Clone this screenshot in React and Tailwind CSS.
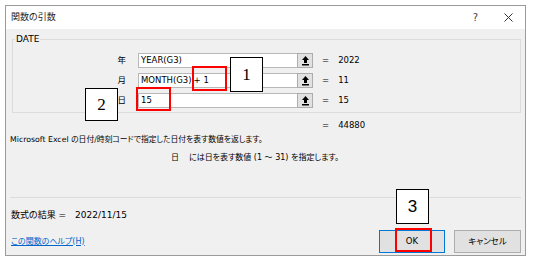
import React from 'react'

function PickIcon() {
  return (
    <svg width="7" height="10" viewBox="0 0 7 10" className="block">
      <path d="M3.5 0 L7 4 H5 V7 H2 V4 H0 Z" fill="#000" />
      <rect x="0" y="8" width="7" height="1.5" fill="#000" />
    </svg>
  )
}

function ArgRow({ label, children, value }) {
  return (
    <div className="flex items-center h-[15px]">
      <span className="w-[113px] text-right leading-none">{label}</span>
      <div className="ml-[12px] w-[160px] h-[15px] bg-white border border-[#b8b8b8] flex items-center pl-[2px] leading-none whitespace-nowrap">
        {children}
      </div>
      <div className="-ml-px w-[16px] h-[15px] bg-[#e1e1e1] border border-[#adadad] flex items-center justify-center">
        <PickIcon />
      </div>
      <span className="ml-[9px] leading-none">=</span>
      <span className="ml-[9px] leading-none">{value}</span>
    </div>
  )
}

export default function App() {
  return (
    <div className="relative w-[534px] h-[264px] bg-white pt-[5px] pl-[5px] text-[8.5px] text-black font-['DejaVu_Sans','Noto_Sans_CJK_JP',sans-serif] [font-feature-settings:'palt']">
      {/* dialog */}
      <div className="w-[521px] h-[251px] border border-[#9b9b9b] flex flex-col">
        <div className="h-[23px] bg-white flex items-center pl-[5px] pr-[12px] shrink-0">
          <span className="text-[#222] text-[9px]">関数の引数</span>
          <span className="ml-auto text-[10px] text-[#444]">?</span>
          <svg width="9" height="9" viewBox="0 0 9 9" className="ml-[26px]">
            <path d="M0.5 0.5 L8.5 8.5 M8.5 0.5 L0.5 8.5" stroke="#333" strokeWidth="1" />
          </svg>
        </div>

        <div className="flex-1 bg-[#f0f0f0] flex flex-col">
          <fieldset className="ml-[6px] mr-[4px] mt-[4px] border border-[#dcdcdc] pb-[4px]">
            <legend className="ml-[2px] px-[1px] leading-[12px] text-[9px]">DATE</legend>
            <div className="mt-[8px] flex flex-col gap-[5px]">
              <ArgRow label="年" value="2022">YEAR(G3)</ArgRow>
              <ArgRow label="月" value="11">MONTH(G3)<span className="ml-[2px]">+ 1</span></ArgRow>
              <ArgRow label="日" value="15">15</ArgRow>
            </div>
          </fieldset>

          <div className="ml-[316px] mt-[6px] leading-[12px]">
            =<span className="ml-[9px]">44880</span>
          </div>
          <div className="ml-[4px] mt-[3px] leading-[12px] text-[7.8px]">
            Microsoft Excel の日付/時刻コードで指定した日付を表す数値を返します。
          </div>
          <div className="ml-[165px] mt-[6px] leading-[12px] text-[8px]">
            日<span className="ml-[10px]">には日を表す数値 (1 ～ 31) を指定します。</span>
          </div>

          <div className="ml-[4px] w-[511px] mt-[33px] h-px bg-[#dcdcdc]" />

          <div className="ml-[5px] mt-[11px] leading-[12px] text-[9px]">
            数式の結果 =<span className="ml-[9px]">2022/11/15</span>
          </div>

          <div className="mt-[9px] ml-[5px] mr-[4px] flex items-center h-[23px]">
            <span className="text-[#0066cc] underline text-[8px]">この関数のヘルプ(H)</span>
            <button className="ml-auto w-[66px] h-[23px] bg-[#e1e1e1] border border-[#0078d7] leading-none">OK</button>
            <button className="ml-[9px] w-[67px] h-[23px] bg-[#e1e1e1] border border-[#adadad] leading-none">キャンセル</button>
          </div>
        </div>
      </div>

      {/* annotations */}
      <div className="absolute left-[192px] top-[66px] w-[35px] h-[25px] border-2 border-[#ff0000]" />
      <div className="absolute left-[136px] top-[87px] w-[35px] h-[24px] border-2 border-[#ff0000]" />
      <div className="absolute left-[395px] top-[228px] w-[37px] h-[24px] border-2 border-[#ff0000]" />

      <div className="absolute left-[230px] top-[57px] w-[33px] h-[35px] bg-white border border-black flex items-center justify-center text-[17px] font-['Liberation_Serif',serif]">1</div>
      <div className="absolute left-[85px] top-[88px] w-[33px] h-[33px] bg-white border border-black flex items-center justify-center text-[17px] font-['Liberation_Serif',serif]">2</div>
      <div className="absolute left-[396px] top-[189px] w-[33px] h-[35px] bg-white border border-black flex items-center justify-center text-[17px] font-['Liberation_Sans',sans-serif]">3</div>
    </div>
  )
}
